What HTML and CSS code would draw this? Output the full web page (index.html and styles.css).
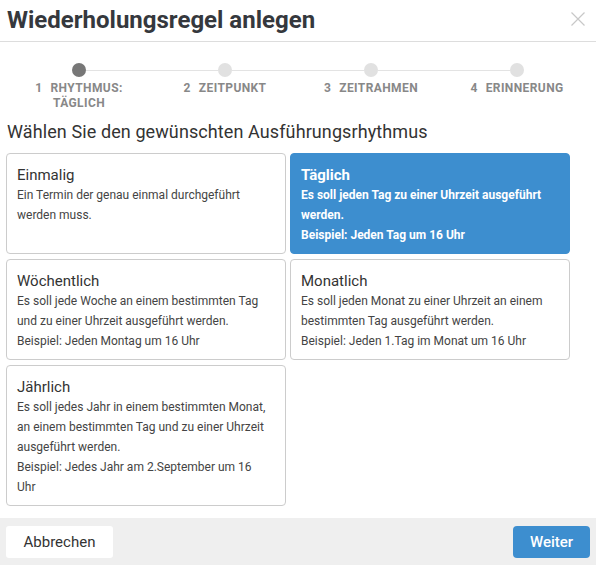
FILE: index.html
```html
<!DOCTYPE html>
<html lang="de">
<head>
<meta charset="utf-8">
<title>Wiederholungsregel anlegen</title>
<link rel="stylesheet" href="styles.css">
</head>
<body>
<div class="dialog">
  <header class="header">
    <h1 class="title">Wiederholungsregel anlegen</h1>
    <button class="close" aria-label="Schließen">
      <svg width="14" height="14" viewBox="0 0 14 14"><path d="M0.5 0.5 L13.5 13.5 M13.5 0.5 L0.5 13.5" stroke="#c8c8c8" stroke-width="1.2" fill="none"/></svg>
    </button>
  </header>

  <div class="stepper">
    <div class="track">
      <span class="dot dot-active"></span>
      <span class="line"></span>
      <span class="dot"></span>
      <span class="line"></span>
      <span class="dot"></span>
      <span class="line"></span>
      <span class="dot"></span>
    </div>
    <div class="labels">
      <div class="label"><span class="num">1</span>RHYTHMUS: TÄGLICH</div>
      <div class="label"><span class="num">2</span>ZEITPUNKT</div>
      <div class="label"><span class="num">3</span>ZEITRAHMEN</div>
      <div class="label"><span class="num">4</span>ERINNERUNG</div>
    </div>
  </div>

  <h2 class="heading">Wählen Sie den gewünschten Ausführungsrhythmus</h2>

  <div class="cards">
    <div class="card">
      <div class="card-title">Einmalig</div>
      <div class="card-text">Ein Termin der genau einmal durchgeführt werden muss.</div>
    </div>
    <div class="card card-selected">
      <div class="card-title">Täglich</div>
      <div class="card-text">Es soll jeden Tag zu einer Uhrzeit ausgeführt werden.</div>
      <div class="card-text">Beispiel: Jeden Tag um 16 Uhr</div>
    </div>
    <div class="card">
      <div class="card-title">Wöchentlich</div>
      <div class="card-text">Es soll jede Woche an einem bestimmten Tag und zu einer Uhrzeit ausgeführt werden.</div>
      <div class="card-text">Beispiel: Jeden Montag um 16 Uhr</div>
    </div>
    <div class="card">
      <div class="card-title">Monatlich</div>
      <div class="card-text">Es soll jeden Monat zu einer Uhrzeit an einem bestimmten Tag ausgeführt werden.</div>
      <div class="card-text">Beispiel: Jeden 1.Tag im Monat um 16 Uhr</div>
    </div>
    <div class="card">
      <div class="card-title">Jährlich</div>
      <div class="card-text">Es soll jedes Jahr in einem bestimmten Monat, an einem bestimmten Tag und zu einer Uhrzeit ausgeführt werden.</div>
      <div class="card-text">Beispiel: Jedes Jahr am 2.September um 16 Uhr</div>
    </div>
  </div>

  <footer class="footer">
    <button class="btn btn-cancel">Abbrechen</button>
    <button class="btn btn-primary">Weiter</button>
  </footer>
</div>
</body>
</html>
```

FILE: styles.css
```css
* {
  box-sizing: border-box;
}

html, body {
  margin: 0;
  padding: 0;
  background: #ffffff;
}

body {
  font-family: Roboto, "Liberation Sans", Arial, sans-serif;
  color: #333333;
}

.dialog {
  width: 596px;
}

.header {
  display: flex;
  justify-content: space-between;
  align-items: flex-start;
  height: 42px;
  padding: 5px 11px 0 7px;
  border-bottom: 1px solid #dddddd;
}

.title {
  margin: 0;
  font-size: 24px;
  line-height: 30px;
  font-weight: 700;
  color: #35383d;
}

.close {
  margin-top: 7px;
  padding: 0;
  border: 0;
  background: none;
  width: 14px;
  height: 14px;
  display: block;
}

.close svg {
  display: block;
}

.stepper {
  margin: 21px 0 0 6px;
  width: 584px;
}

.track {
  display: flex;
  align-items: center;
  padding-left: 66px;
  height: 14px;
}

.dot {
  width: 14px;
  height: 14px;
  border-radius: 50%;
  background: #e1e1e1;
  flex: none;
}

.dot-active {
  background: #777777;
}

.line {
  width: 132px;
  height: 1px;
  background: #e3e3e3;
  flex: none;
}

.labels {
  display: grid;
  grid-template-columns: repeat(4, 146px);
  margin-top: 4px;
}

.label {
  text-align: center;
  font-size: 12px;
  line-height: 15px;
  font-weight: 700;
  letter-spacing: 0.4px;
  color: #888888;
  padding: 0 8px;
}

.num {
  margin-right: 8px;
}

.heading {
  margin: 9px 0 0 7px;
  font-size: 18px;
  line-height: 24px;
  font-weight: 400;
  letter-spacing: 0.1px;
  color: #333333;
}

.cards {
  display: grid;
  grid-template-columns: 280px 280px;
  column-gap: 4px;
  row-gap: 5px;
  margin: 9px 0 0 6px;
  align-items: stretch;
}

.card {
  border: 1px solid #cccccc;
  border-radius: 4px;
  padding: 11px 14px 8px 10px;
  background: #ffffff;
}

.card-title {
  font-size: 15px;
  line-height: 20px;
  color: #333333;
}

.card-text {
  font-size: 12px;
  line-height: 20px;
  color: #444444;
}

.card-selected {
  background: #3d8ecf;
  border-color: #3d8ecf;
}

.card-selected .card-title,
.card-selected .card-text {
  color: #ffffff;
  font-weight: 700;
}

.footer {
  display: flex;
  justify-content: space-between;
  align-items: center;
  margin-top: 12px;
  height: 48px;
  padding: 0 6px;
  background: #efefef;
}

.btn {
  height: 32px;
  border: 0;
  border-radius: 3px;
  font-family: Roboto, "Liberation Sans", Arial, sans-serif;
  font-size: 15px;
  padding: 0 17px;
}

.btn-cancel {
  width: 107px;
  background: #ffffff;
  color: #333333;
}

.btn-primary {
  width: 77px;
  background: #3d8ecf;
  color: #ffffff;
  font-weight: 500;
  border-radius: 4px;
}
```
